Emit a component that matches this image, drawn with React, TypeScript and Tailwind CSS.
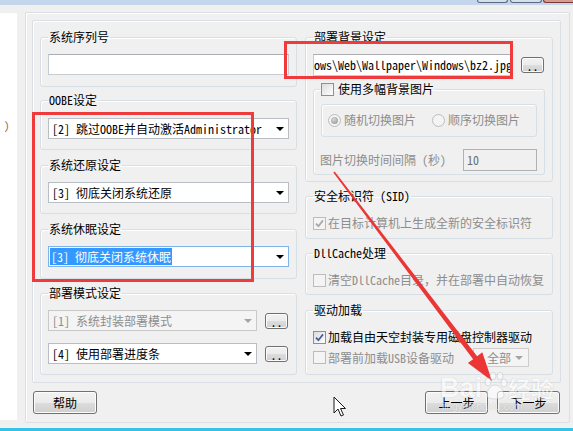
import type { ReactNode } from 'react';

const BTN =
    'flex items-center justify-center rounded-[3px] border border-[#707070] bg-[linear-gradient(#f2f2f2_0%,#ebebeb_50%,#dddddd_51%,#cfcfcf_100%)] shadow-[inset_0_0_0_1px_#fcfcfc]';

type GroupProps = {
    label: ReactNode;
    className?: string;
    children?: ReactNode;
};

function Group({ label, className = '', children }: GroupProps) {
    return (
        <fieldset className={`rounded-[3px] border border-[#d5dfe5] px-[7px] shadow-[inset_1px_1px_0_#ffffff] ${className}`}>
            <legend className="px-[1px] text-[12px] leading-[14px] text-black">{label}</legend>
            {children}
        </fieldset>
    );
}

function Check({ checked = false, disabled = false }: { checked?: boolean; disabled?: boolean }) {
    return (
        <span
            className={`inline-flex h-[13px] w-[13px] shrink-0 items-center justify-center border ${
                disabled
                    ? 'border-[#bcbcbc] bg-[#f4f4f4]'
                    : 'border-[#8e8f8f] bg-[linear-gradient(135deg,#dcdcdc,#ffffff)]'
            }`}
        >
            {checked && (
                <svg width="9" height="9" viewBox="0 0 9 9">
                    <path
                        d="M1 4.6 L3.4 7.2 L8 1.4"
                        fill="none"
                        stroke={disabled ? '#a8a8a8' : '#4a5f97'}
                        strokeWidth="1.8"
                    />
                </svg>
            )}
        </span>
    );
}

function Radio({ checked = false }: { checked?: boolean }) {
    return (
        <span className="inline-flex h-[13px] w-[13px] shrink-0 items-center justify-center rounded-full border border-[#bcbcbc] bg-[#f4f4f4]">
            {checked && <span className="h-[7px] w-[7px] rounded-full bg-[radial-gradient(circle_at_40%_35%,#d8d8d8,#8f8f8f)]" />}
        </span>
    );
}

type ComboProps = {
    text: string;
    className?: string;
    disabled?: boolean;
    selected?: boolean;
};

function Combo({ text, className = '', disabled = false, selected = false }: ComboProps) {
    const box = disabled
        ? 'border-[#c9c9c9] bg-[#f4f4f4] text-[#8d8d8d]'
        : selected
          ? 'border-[#7eb4ea] bg-white text-black'
          : 'border-[#b9bec5] bg-white text-black';
    return (
        <div className={`flex h-[21px] items-center border ${box} ${className}`}>
            <div className="min-w-0 flex-1 overflow-hidden whitespace-nowrap pl-[1px] text-[12px] leading-[17px]">
                {selected ? <span className="bg-[#3399ff] px-[1px] text-white">{text}</span> : <span className="px-[2px]">{text}</span>}
            </div>
            <div className="flex w-[24px] shrink-0 justify-end pr-[4px]">
                <span
                    className={`h-0 w-0 border-x-[4px] border-t-[4px] border-x-transparent ${
                        disabled ? 'border-t-[#a5a5a5]' : 'border-t-black'
                    }`}
                />
            </div>
        </div>
    );
}

function DotsButton({ className = '' }: { className?: string }) {
    return (
        <div className={`${BTN} h-[16px] w-[23px] shrink-0 items-end text-[12px] leading-[12px] ${className}`}>..</div>
    );
}

function TitleStrip() {
    return (
        <div className="flex h-[5px] bg-[#c3d6ec] pl-[477px]">
            <div className="h-[3px] w-[31px] rounded-b-[3px] border-x border-b border-[#5b6878] bg-[#d3e0ef]" />
            <div className="ml-[2px] h-[3px] w-[32px] rounded-b-[3px] border-x border-b border-[#5b6878] bg-[#d3e0ef]" />
            <div className="ml-[1px] h-[3px] w-[30px] rounded-bl-[3px] border-b border-l border-[#7a3a36] bg-[#d79b93]" />
        </div>
    );
}

function LeftColumn() {
    return (
        <div className="flex w-[257px] flex-col">
            <Group label="系统序列号" className="h-[57px]">
                <div className="mt-[10px] h-[21px] w-[241px] border border-[#c5cbd3] border-t-[#abadb3] bg-white" />
            </Group>

            <Group label="OOBE设定" className="mt-[6px] h-[57px]">
                <Combo className="mt-[11px]" text="[2] 跳过OOBE并自动激活Administrator" />
            </Group>

            <Group label="系统还原设定" className="mt-[8px] h-[56px]">
                <Combo className="mt-[10px] h-[20px]" text="[3] 彻底关闭系统还原" />
            </Group>

            <Group label="系统休眠设定" className="mt-[8px] h-[57px]">
                <Combo className="mt-[10px] h-[20px]" text="[3] 彻底关闭系统休眠" selected />
            </Group>

            <Group label="部署模式设定" className="mt-[7px] h-[89px]">
                <div className="mt-[10px] flex items-center">
                    <Combo className="h-[20px] w-[209px]" text="[1] 系统封装部署模式" disabled />
                    <DotsButton className="ml-[8px]" />
                </div>
                <div className="mt-[12px] flex items-center">
                    <Combo className="h-[20px] w-[209px]" text="[4] 使用部署进度条" />
                    <DotsButton className="ml-[8px]" />
                </div>
            </Group>
        </div>
    );
}

function RightColumn() {
    return (
        <div className="ml-[8px] flex w-[248px] flex-col">
            <Group label="部署背景设定" className="h-[152px]">
                <div className="mt-[10px] flex items-center">
                    <div className="h-[22px] w-[198px] overflow-hidden whitespace-nowrap border border-[#c5cbd3] border-t-[#abadb3] bg-white text-[12px] leading-[20px]">
                        ows\Web\Wallpaper\Windows\bz2.jpg
                    </div>
                    <DotsButton className="ml-[10px]" />
                </div>

                <fieldset className="mt-[6px] h-[93px] rounded-[3px] border border-[#d5dfe5] px-[7px] shadow-[inset_1px_1px_0_#ffffff]">
                    <legend className="-ml-[1px] px-[1px] text-[12px] leading-[14px]">
                        <span className="inline-flex items-center gap-[4px]">
                            <Check />
                            使用多幅背景图片
                        </span>
                    </legend>

                    <div className="mt-[6px] flex h-[33px] items-center rounded-[3px] border border-[#d5dfe5] pl-[6px] text-[12px] leading-[14px] text-[#8d8d8d] shadow-[inset_1px_1px_0_#ffffff]">
                        <span className="flex w-[104px] items-center gap-[3px]">
                            <Radio checked />
                            随机切换图片
                        </span>
                        <span className="flex items-center gap-[3px]">
                            <Radio />
                            顺序切换图片
                        </span>
                    </div>

                    <div className="mt-[12px] flex items-center justify-between text-[12px] leading-[14px] text-[#8d8d8d]">
                        <span className="-ml-[1px]">图片切换时间间隔 (秒)</span>
                        <div className="h-[22px] w-[74px] border border-[#adb2b5] bg-[#f0f0f0] pl-[3px] leading-[20px] text-[#6d6d6d]">10</div>
                    </div>
                </fieldset>
            </Group>

            <Group label="安全标识符 (SID)" className="mt-[7px] h-[50px]">
                <div className="mt-[13px] flex items-center gap-[2px] text-[12px] leading-[14px] text-[#8d8d8d]">
                    <Check checked disabled />
                    在目标计算机上生成全新的安全标识符
                </div>
            </Group>

            <Group label="DllCache处理" className="mt-[7px] h-[49px]">
                <div className="mt-[13px] flex items-center gap-[2px] text-[12px] leading-[14px] text-[#8d8d8d]">
                    <Check disabled />
                    清空DllCache目录，并在部署中自动恢复
                </div>
            </Group>

            <Group label="驱动加载" className="mt-[8px] h-[72px]">
                <div className="mt-[13px] flex items-center gap-[2px] text-[12px] leading-[14px] text-black">
                    <Check checked />
                    加载自由天空封装专用磁盘控制器驱动
                </div>
                <div className="mt-[4px] flex items-center text-[12px] leading-[14px] text-[#8d8d8d]">
                    <Check disabled />
                    <span className="ml-[2px]">部署前加载USB设备驱动</span>
                    <div className="ml-auto mr-[16px] flex h-[19px] w-[56px] items-center border border-[#cdcdcd] bg-[#f4f4f4]">
                        <span className="flex-1 pl-[13px]">全部</span>
                        <span className="mr-[5px] h-0 w-0 border-x-[4px] border-t-[4px] border-x-transparent border-t-[#a5a5a5]" />
                    </div>
                </div>
            </Group>
        </div>
    );
}

function Overlays() {
    return (
        <>
            {/* red annotation boxes */}
            <div className="pointer-events-none absolute left-[284px] top-[41px] h-[38px] w-[229px] border-[3px] border-[#ef3b3b]" />
            <div className="pointer-events-none absolute left-[32px] top-[112px] h-[170px] w-[222px] border-[3px] border-[#ef3b3b]" />

            {/* red arrow */}
            <svg className="pointer-events-none absolute left-0 top-0" width="573" height="431">
                <polygon
                    points="333.3,172.6 473.1,359.2 467.9,363.1 492,381 482.3,352.3 477.1,356.2 334.7,171.4"
                    fill="#ec3636"
                />
            </svg>

            {/* baidu watermark */}
            <div className="pointer-events-none absolute left-[440px] top-[372px] flex flex-col opacity-55">
                <div className="flex items-end font-['Liberation_Sans',sans-serif] text-[27px] font-bold leading-[26px] text-white [text-shadow:0_0_1px_#9a9a9a]">
                    <span>Bai</span>
                    <svg width="26" height="28" viewBox="0 0 26 28" className="mb-[1px]">
                        <g fill="#ffffff" stroke="#a8a8a8" strokeWidth="0.6">
                            <ellipse cx="6" cy="10" rx="3" ry="4" />
                            <ellipse cx="11" cy="4" rx="3" ry="3.6" />
                            <ellipse cx="18" cy="4" rx="3" ry="3.6" />
                            <ellipse cx="22" cy="11" rx="3" ry="4" />
                            <path d="M5 24 C5 17 9 13 13 13 C18 13 22 18 22 24 C22 28 5 28 5 24 Z" />
                        </g>
                    </svg>
                    <span className="font-['Noto_Sans_CJK_SC',sans-serif] text-[23px]">经验</span>
                </div>
                <div className="mt-[1px] pl-[2px] font-['Liberation_Sans',sans-serif] text-[10px] leading-[10px] text-white [text-shadow:0_0_1px_#8a8a8a]">
                    jingyan.baidu.com
                </div>
            </div>

            {/* mouse cursor */}
            <svg className="pointer-events-none absolute left-[333px] top-[396px]" width="14" height="22" viewBox="0 0 14 22">
                <path d="M1 1 L1 17 L5 13 L8 20 L10.5 19 L7.5 12.5 L12.5 12.5 Z" fill="#ffffff" stroke="#1a1a1a" strokeWidth="1" />
            </svg>
        </>
    );
}

export default function App() {
    return (
        <div className="relative h-[431px] w-[573px] overflow-hidden bg-[#f0f0f0] font-['Noto_Sans_Mono_CJK_SC','Noto_Sans_CJK_SC',monospace] text-black">
            <TitleStrip />

            <div className="flex h-[420px]">
                {/* left neighbour window */}
                <div className="mt-[8px] h-[407px] w-[17px] bg-white pl-[4px] pt-[105px] text-[11px] leading-[14px] text-[#8a6a3a]">)</div>

                {/* main frame */}
                <div className="ml-[8px] mt-[7px] flex h-[411px] w-[545px] flex-col rounded-[2px] border border-[#d9dfe4] shadow-[inset_1px_1px_0_#ffffff]">
                    <div className="ml-[6px] mt-[7px] flex h-[363px] w-[529px] rounded-[2px] border border-[#d9dfe4] pl-[7px] pt-[9px] shadow-[inset_1px_1px_0_#ffffff]">
                        <LeftColumn />
                        <RightColumn />
                    </div>

                    <div className="mt-[8px] flex pl-[7px] text-[12px] leading-[14px]">
                        <div className={`${BTN} h-[23px] w-[64px]`}>帮助</div>
                        <div className={`${BTN} ml-auto h-[23px] w-[63px]`}>上一步</div>
                        <div className={`${BTN} ml-[9px] mr-[9px] h-[23px] w-[63px]`}>下一步</div>
                    </div>
                </div>
            </div>

            <div className="h-[3px] bg-[#eef3f6]" />
            <div className="h-[3px] bg-[#36c1e6]" />

            <Overlays />
        </div>
    );
}
